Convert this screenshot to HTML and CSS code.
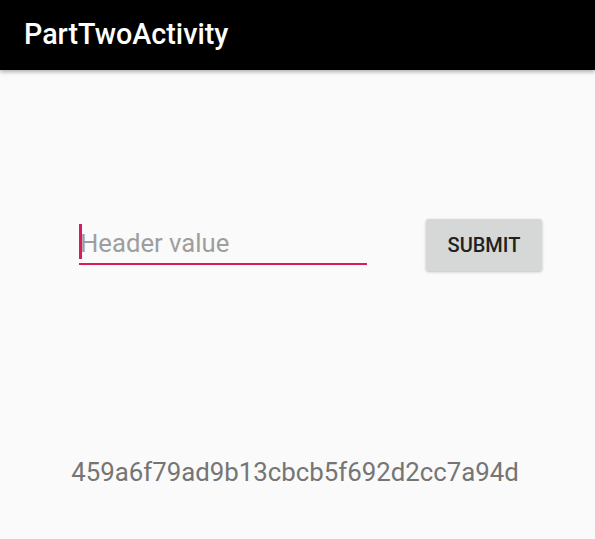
FILE: index.html
```html
<!DOCTYPE html>
<html>
<head>
<meta charset="utf-8">
<link rel="stylesheet" href="styles.css">
</head>
<body>
<header class="toolbar"><span class="title">PartTwoActivity</span></header>
<main class="content">
  <div class="form-row">
    <div class="field">
      <span class="cursor"></span>
      <span class="placeholder">Header value</span>
    </div>
    <button class="submit">SUBMIT</button>
  </div>
  <div class="hash">459a6f79ad9b13cbcb5f692d2cc7a94d</div>
</main>
</body>
</html>
```
FILE: styles.css
```css
html, body {
  margin: 0;
  padding: 0;
  background: #fafafa;
  font-family: Roboto, "Liberation Sans", sans-serif;
  width: 595px;
  height: 539px;
  overflow: hidden;
}
.toolbar {
  height: 70px;
  background: #000;
  display: flex;
  align-items: center;
  padding-left: 24px;
  box-shadow: 0 2px 4px rgba(0,0,0,0.3);
  position: relative;
}
.title {
  color: #fff;
  font-size: 28.7px;
  font-weight: 500;
  margin-top: -2px;
}
.content {
  display: flex;
  flex-direction: column;
}
.form-row {
  display: flex;
  align-items: flex-start;
  padding-left: 79px;
  margin-top: 149px;
}
.field {
  width: 288px;
  height: 43px;
  border-bottom: 2px solid #d81b60;
  display: flex;
  align-items: center;
  position: relative;
  box-sizing: border-box;
  margin-top: 3px;
}
.cursor {
  position: absolute;
  left: 0;
  top: 2px;
  width: 2.5px;
  height: 35px;
  background: #d81b60;
}
.placeholder {
  color: #9e9e9e;
  font-size: 25.7px;
  padding-left: 1px;
  margin-top: 0;
}
.submit {
  margin-left: 59px;
  width: 116px;
  height: 52px;
  border: none;
  border-radius: 3px;
  background: #d6d7d7;
  color: #212121;
  font-family: Roboto, "Liberation Sans", sans-serif;
  font-size: 20px;
  font-weight: 500;
  box-shadow: 0 1px 3px rgba(0,0,0,0.25);
  padding: 0;
}
.hash {
  margin-top: 186px;
  text-align: center;
  color: #757575;
  font-size: 25.8px;
  padding-right: 5px;
}
```
